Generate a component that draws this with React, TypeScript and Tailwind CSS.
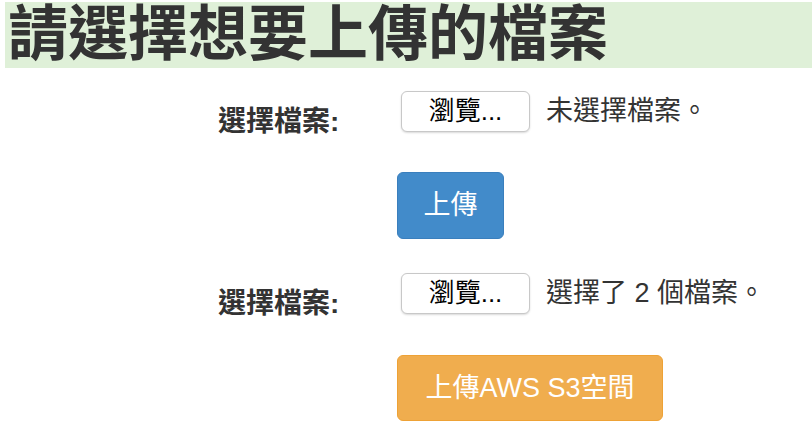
export default function App() {
  const font = { fontFamily: '"Liberation Sans", "Noto Sans CJK TC", sans-serif' };

  const FileRow = ({ status }: { status: string }) => (
    <div className="flex h-[41px] items-start">
      <label className="ml-[218px] mt-[15px] w-[179px] text-[28px] leading-[32px] font-bold text-[#333]">
        選擇檔案:
      </label>
      <div className="flex items-center">
        <button className="ml-[4px] flex h-[41px] w-[129px] items-center justify-center rounded-[6px] border border-[#c8c8c8] bg-white text-[26px] text-black shadow-[0_1px_2px_rgba(0,0,0,0.15)]">
          瀏覽...
        </button>
        <span className="ml-[16px] text-[27px] text-[#333]">{status}</span>
      </div>
    </div>
  );

  return (
    <div className="pt-[2px]" style={font}>
      <h1 className="ml-[5px] bg-[#dff0d8] pl-[3px] text-[60px] leading-[66px] font-bold text-[#333]">
        請選擇想要上傳的檔案
      </h1>

      <div className="mt-[23px]">
        <FileRow status="未選擇檔案。" />
        <button className="ml-[397px] mt-[40px] h-[67px] w-[107px] rounded-[6px] border border-[#3a7fbd] bg-[#428bca] text-[27px] text-white">
          上傳
        </button>
      </div>

      <div className="mt-[34px]">
        <FileRow status="選擇了 2 個檔案。" />
        <button className="ml-[397px] mt-[41px] h-[66px] w-[266px] rounded-[6px] border border-[#eea236] bg-[#f0ad4e] text-[27px] text-white">
          上傳AWS S3空間
        </button>
      </div>
    </div>
  );
}
